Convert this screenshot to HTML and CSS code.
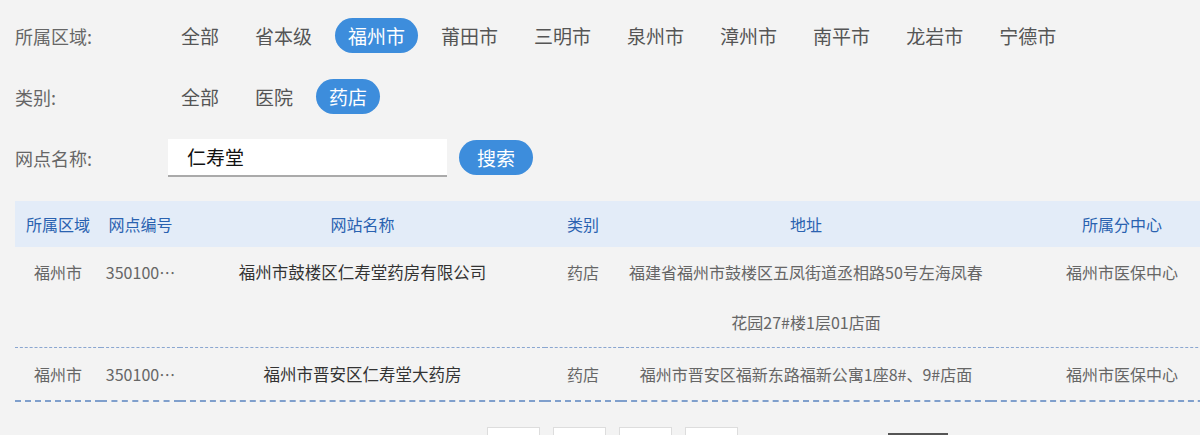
FILE: index.html
```html
<!DOCTYPE html>
<html lang="zh-CN">
<head>
<meta charset="utf-8">
<title>网点查询</title>
<link rel="stylesheet" href="styles.css">
</head>
<body>
<div class="page">
  <div class="filter-row">
    <div class="label">所属区域:</div>
    <div class="options">
      <span class="opt">全部</span>
      <span class="opt">省本级</span>
      <span class="opt active">福州市</span>
      <span class="opt">莆田市</span>
      <span class="opt">三明市</span>
      <span class="opt">泉州市</span>
      <span class="opt">漳州市</span>
      <span class="opt">南平市</span>
      <span class="opt">龙岩市</span>
      <span class="opt">宁德市</span>
    </div>
  </div>
  <div class="filter-row">
    <div class="label">类别:</div>
    <div class="options">
      <span class="opt">全部</span>
      <span class="opt">医院</span>
      <span class="opt active">药店</span>
    </div>
  </div>
  <div class="filter-row">
    <div class="label">网点名称:</div>
    <div class="search">
      <div class="input">仁寿堂</div>
      <span class="btn">搜索</span>
    </div>
  </div>

  <table class="grid">
    <colgroup>
      <col class="c1"><col class="c2"><col class="c3"><col class="c4"><col class="c5"><col class="c6">
    </colgroup>
    <thead>
      <tr>
        <th>所属区域</th><th>网点编号</th><th>网站名称</th><th>类别</th><th>地址</th><th>所属分中心</th>
      </tr>
    </thead>
    <tbody>
      <tr>
        <td class="top">福州市</td>
        <td class="top">350100…</td>
        <td class="top name">福州市鼓楼区仁寿堂药房有限公司</td>
        <td class="top">药店</td>
        <td class="addr">福建省福州市鼓楼区五凤街道丞相路50号左海凤春花园27#楼1层01店面</td>
        <td class="top">福州市医保中心</td>
      </tr>
      <tr class="last">
        <td>福州市</td>
        <td>350100…</td>
        <td class="name">福州市晋安区仁寿堂大药房</td>
        <td>药店</td>
        <td class="addr">福州市晋安区福新东路福新公寓1座8#、9#店面</td>
        <td>福州市医保中心</td>
      </tr>
    </tbody>
  </table>

  <div class="pager">
    <span class="pg"></span>
    <span class="pg"></span>
    <span class="pg"></span>
    <span class="pg"></span>
    <span class="go"></span>
  </div>
</div>
</body>
</html>
```

FILE: styles.css
```css
html, body {
  margin: 0;
  padding: 0;
  overflow: hidden;
  background: #f3f3f3;
}
body {
  font-family: "Noto Sans CJK SC", "Noto Sans", sans-serif;
  color: #555;
}
.page {
  padding: 18px 0 0 15px;
}
.filter-row {
  display: flex;
  align-items: center;
  height: 35px;
  margin-bottom: 26px;
}
.label {
  width: 153px;
  font-size: 18px;
  color: #666;
}
.options {
  display: flex;
  gap: 10px;
}
.opt {
  font-size: 19px;
  line-height: 35px;
  height: 35px;
  padding: 0 13px;
  border-radius: 18px;
  color: #555;
}
.opt.active {
  background: #3d8ddc;
  color: #fff;
}
.search {
  display: flex;
  align-items: center;
}
.input {
  width: 260px;
  height: 36px;
  padding-left: 19px;
  background: #fff;
  border-bottom: 2px solid #aaa;
  font-size: 19px;
  line-height: 36px;
  color: #111;
}
.btn {
  margin-left: 12px;
  width: 74px;
  height: 35px;
  line-height: 35px;
  text-align: center;
  font-size: 19px;
  color: #fff;
  background: #3d8ddc;
  border-radius: 18px;
}
.grid {
  width: 1238px;
  table-layout: fixed;
  border-collapse: collapse;
  font-size: 16px;
}
.c1 { width: 86px; }
.c2 { width: 79px; }
.c3 { width: 365px; }
.c4 { width: 76px; }
.c5 { width: 370px; }
.c6 { width: 262px; }
.grid thead tr {
  background: #e3ecf8;
}
.grid th {
  height: 46px;
  padding: 0;
  font-weight: normal;
  color: #2a62b0;
  text-align: center;
}
.grid tbody tr {
  border-bottom: 1px dashed #8aa6d0;
}
.grid tbody tr.last {
  border-bottom: 2px dashed #7f9fcc;
}
.grid td {
  padding: 0;
  line-height: 50px;
  text-align: center;
  color: #666;
  white-space: nowrap;
  overflow: hidden;
  text-overflow: ellipsis;
}
.grid td.top {
  vertical-align: top;
}
.grid td.name {
  color: #333;
  font-size: 16.5px;
}
.grid td.addr {
  white-space: normal;
  padding: 0 5px;
  color: #666;
}
.grid tr.last td {
  padding-top: 1px;
  padding-bottom: 1px;
}
.pager {
  display: flex;
  margin-top: 25px;
  padding-left: 472px;
}
.pg {
  width: 51px;
  height: 30px;
  background: #fff;
  border: 1px solid #ddd;
  margin-right: 13px;
}
.go {
  margin-left: 137px;
  margin-top: 6px;
  width: 60px;
  height: 30px;
  background: #555;
}
```
